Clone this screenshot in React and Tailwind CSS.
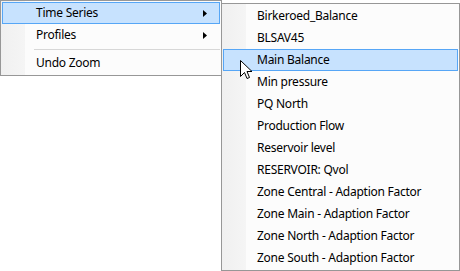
import React from "react";

const subItems = [
  "Birkeroed_Balance",
  "BLSAV45",
  "Main Balance",
  "Min pressure",
  "PQ North",
  "Production Flow",
  "Reservoir level",
  "RESERVOIR: Qvol",
  "Zone Central - Adaption Factor",
  "Zone Main - Adaption Factor",
  "Zone North - Adaption Factor",
  "Zone South - Adaption Factor",
];

const font = { fontFamily: '"Segoe UI", "Noto Sans", "Open Sans", sans-serif' };

// menu panel with the light grey icon gutter on the left
const panel =
  "flex flex-col border border-[#979797] p-[1px] bg-[linear-gradient(to_right,#f0f0f0_0px,#f5f5f5_24px,#fcfcfc_24px)]";

function Arrow() {
  return (
    <svg width="4" height="7" viewBox="0 0 4 7" className="ml-auto mr-[12px]">
      <path d="M0 0 L4 3.5 L0 7 Z" fill="#000" />
    </svg>
  );
}

function Cursor() {
  return (
    <svg width="13" height="21" viewBox="0 0 13 21" className="absolute left-[240px] top-[60px]">
      <path
        d="M0.5 0.5 L0.5 16.5 L4.5 12.5 L7 18.5 L9.5 17.5 L7 11.5 L12 11.5 Z"
        fill="#fff"
        stroke="#000"
        strokeWidth="1"
      />
    </svg>
  );
}

function MenuItem({ label, active, arrow }) {
  return (
    <div
      className={`h-[22px] flex items-center text-[12px] tracking-[-0.25px] text-black border ${
        active ? "bg-[#c7e2fe] border-[#56a6f6]" : "border-transparent"
      }`}
    >
      <span className="pl-[33px]">{label}</span>
      {arrow && <Arrow />}
    </div>
  );
}

export default function App() {
  return (
    <div className="relative w-[460px] h-[271px] bg-white overflow-hidden" style={font}>
      <div className="flex items-start">
        {/* main menu */}
        <div className={`${panel} w-[222px] h-[76px]`}>
          <MenuItem label="Time Series" active arrow />
          <MenuItem label="Profiles" arrow />
          <div className="h-[6px] flex items-center pl-[32px]">
            <div className="h-px w-full bg-[#d7d7d7]" />
          </div>
          <MenuItem label="Undo Zoom" />
        </div>

        {/* submenu, overlapping the main menu's right border */}
        <div className={`${panel} -ml-px mt-[3px] w-[239px] h-[268px]`}>
          {subItems.map((s) => (
            <MenuItem key={s} label={s} active={s === "Main Balance"} />
          ))}
        </div>
      </div>

      <Cursor />
    </div>
  );
}
